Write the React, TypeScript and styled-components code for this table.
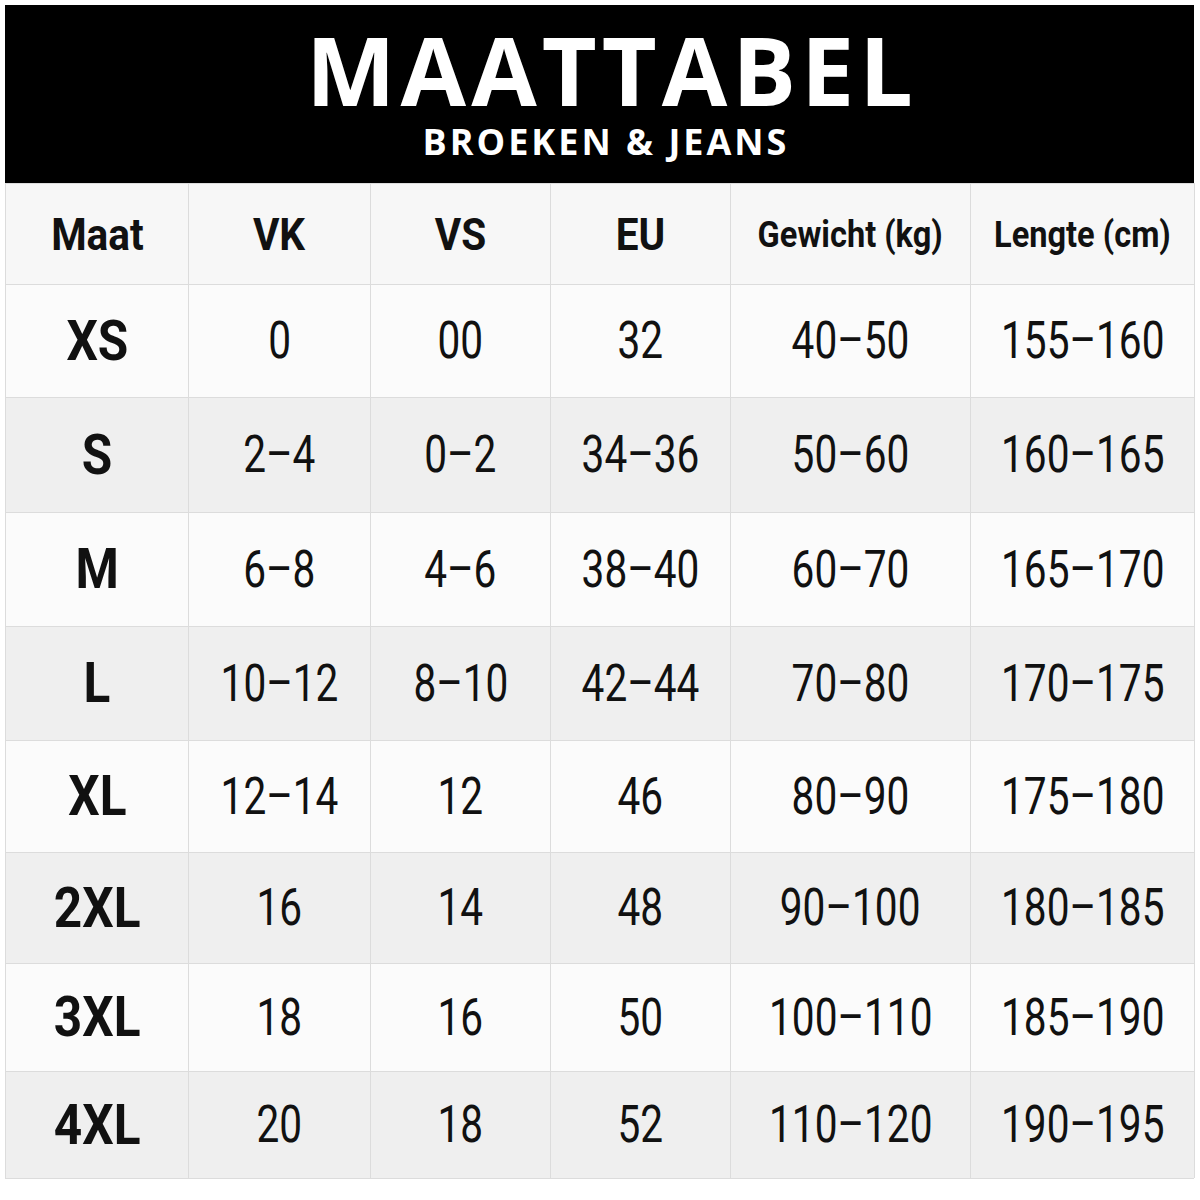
import React from "react";
import styled, { createGlobalStyle } from "styled-components";

const GlobalStyle = createGlobalStyle`
  html, body {
    margin: 0;
    padding: 0;
    background: #ffffff;
  }
  body {
    font-family: Roboto, "Liberation Sans", sans-serif;
    color: #111111;
  }
`;

const Page = styled.div`
  width: 1200px;
  height: 1200px;
  padding: 5px 6px 0 5px;
  box-sizing: border-box;
  background: #ffffff;
`;

const Banner = styled.header`
  height: 178px;
  background: #000000;
  display: flex;
  flex-direction: column;
  align-items: center;
  box-sizing: border-box;
  padding-top: 24px;
`;

const Title = styled.h1`
  margin: 0 -5px 0 20px;
  font-family: "Open Sans", "Liberation Sans", sans-serif;
  font-weight: 700;
  font-size: 95px;
  line-height: 80px;
  letter-spacing: 5px;
  color: #ffffff;
`;

const Subtitle = styled.h2`
  margin: 15px -3px 0 10px;
  font-family: "Open Sans", "Liberation Sans", sans-serif;
  font-weight: 700;
  font-size: 36px;
  line-height: 36px;
  letter-spacing: 3px;
  color: #ffffff;
`;

const Table = styled.div`
  display: grid;
  grid-template-columns: 183px 182px 180px 180px 240px 224px;
  border-left: 1px solid #dcdcdc;
  border-bottom: 1px solid #dcdcdc;
  box-sizing: border-box;
`;

const Row = styled.div<{ $h: number; $shade: "head" | "light" | "dark" }>`
  display: contents;
  & > div {
    height: ${(p) => p.$h}px;
    background: ${(p) =>
      p.$shade === "dark" ? "#efefef" : p.$shade === "head" ? "#f7f7f7" : "#fbfbfb"};
  }
`;

const Cell = styled.div`
  display: flex;
  align-items: center;
  justify-content: center;
  border-right: 1px solid #dcdcdc;
  border-top: 1px solid #dcdcdc;
  box-sizing: border-box;
  overflow: hidden;
  white-space: nowrap;
`;

const Text = styled.span<{ $size: number; $weight: number; $scale: number }>`
  display: inline-block;
  font-family: Roboto, "Liberation Sans", sans-serif;
  font-size: ${(p) => p.$size}px;
  font-weight: ${(p) => p.$weight};
  line-height: 1;
  color: #111111;
  transform: scaleX(${(p) => p.$scale});
`;

const headers: { label: string; small?: boolean }[] = [
  { label: "Maat" },
  { label: "VK" },
  { label: "VS" },
  { label: "EU" },
  { label: "Gewicht (kg)", small: true },
  { label: "Lengte (cm)", small: true },
];

const rows: { cells: string[]; h: number }[] = [
  { cells: ["XS", "0", "00", "32", "40–50", "155–160"], h: 113 },
  { cells: ["S", "2–4", "0–2", "34–36", "50–60", "160–165"], h: 115 },
  { cells: ["M", "6–8", "4–6", "38–40", "60–70", "165–170"], h: 114 },
  { cells: ["L", "10–12", "8–10", "42–44", "70–80", "170–175"], h: 114 },
  { cells: ["XL", "12–14", "12", "46", "80–90", "175–180"], h: 112 },
  { cells: ["2XL", "16", "14", "48", "90–100", "180–185"], h: 111 },
  { cells: ["3XL", "18", "16", "50", "100–110", "185–190"], h: 108 },
  { cells: ["4XL", "20", "18", "52", "110–120", "190–195"], h: 107 },
];

export default function App() {
  return (
    <>
      <GlobalStyle />
      <Page>
        <Banner>
          <Title>MAATTABEL</Title>
          <Subtitle>BROEKEN &amp; JEANS</Subtitle>
        </Banner>
        <Table>
          <Row $h={101} $shade="head">
            {headers.map((h) => (
              <Cell key={h.label}>
                <Text
                  $size={h.small ? 37 : 45}
                  $weight={700}
                  $scale={h.small ? 0.88 : 0.9}
                >
                  {h.label}
                </Text>
              </Cell>
            ))}
          </Row>
          {rows.map((r, i) => (
            <Row key={r.cells[0]} $h={r.h} $shade={i % 2 === 1 ? "dark" : "light"}>
              {r.cells.map((c, j) => (
                <Cell key={j}>
                  {j === 0 ? (
                    <Text $size={55} $weight={700} $scale={0.9}>
                      {c}
                    </Text>
                  ) : (
                    <Text $size={52} $weight={400} $scale={0.78}>
                      {c}
                    </Text>
                  )}
                </Cell>
              ))}
            </Row>
          ))}
        </Table>
      </Page>
    </>
  );
}
